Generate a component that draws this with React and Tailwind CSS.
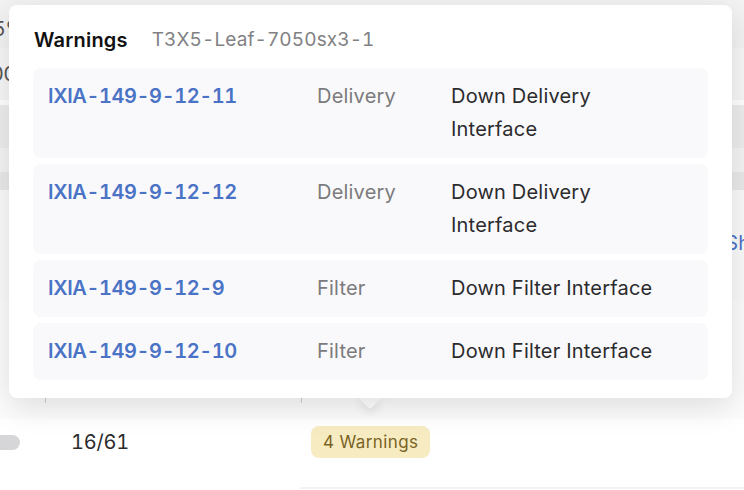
const warnings = [
  { port: "IXIA-149-9-12-11", type: "Delivery", desc: "Down Delivery Interface" },
  { port: "IXIA-149-9-12-12", type: "Delivery", desc: "Down Delivery Interface" },
  { port: "IXIA-149-9-12-9", type: "Filter", desc: "Down Filter Interface" },
  { port: "IXIA-149-9-12-10", type: "Filter", desc: "Down Filter Interface" },
];

function WarningRow({ w }) {
  return (
    <div className="flex items-start rounded-lg bg-[#f9f9fb] py-3 pl-[15px] text-[20px] leading-[33px] tracking-[0.2px]">
      <span className="w-[269px] shrink-0 font-semibold tabular-nums tracking-[-0.4px] text-[#4a73c6]">{w.port}</span>
      <span className="w-[134px] shrink-0 text-[#7b7b7d]">{w.type}</span>
      <span className="w-[214px] text-[#2b2b2d]">{w.desc}</span>
    </div>
  );
}

export default function App() {
  return (
    <div className="relative h-[490px] w-[744px] overflow-hidden bg-white font-['Inter',sans-serif]">
      {/* background table, dimmed behind the popover */}
      <div className="flex flex-col text-[20px] text-[#2b2b2d]">
        <div className="flex h-[48px] items-center bg-[#f3f3f4]">
          <span className="-ml-[7px] mt-[10px] text-[#555]">5%</span>
        </div>
        <div className="flex h-[52px] items-center bg-[#f7f7f8]">
          <span className="-ml-[9px] text-[#555]">00</span>
        </div>
        <div className="h-[5px] bg-white"></div>
        <div className="h-[43px] bg-[#ededee]"></div>
        <div className="h-[24px] bg-[#f4f4f5]"></div>
        <div className="h-[18px] bg-[#e9e9ea]"></div>
        <div className="flex h-[110px] items-center justify-end bg-[#fafafa]">
          <span className="-mr-[6px] mt-[-4px] text-[#4a73c6]">Sh</span>
        </div>
        <div className="h-[119px] bg-[#fcfcfc]"></div>
        <div className="flex h-[46px] items-center">
          <div className="-ml-[10px] h-[15px] w-[30px] rounded-full bg-[#d6d6d8]"></div>
          <span className="ml-[51px] w-[240px] tabular-nums tracking-[-0.2px]">16/61</span>
          <span className="rounded-lg bg-[#f6ebc1] px-[12px] py-[3px] text-[17px] leading-[26px] tracking-[0.4px] text-[#7a6325]">
            4 Warnings
          </span>
        </div>
        <div className="h-[22px]"></div>
        <div className="ml-[300px] h-[2px] bg-[#f3f3f4]"></div>
      </div>

      {/* column ticks peeking below the popover */}
      <div className="absolute left-[45px] top-[396px] h-[7px] w-px bg-[#cfcfd1]"></div>
      <div className="absolute left-[301px] top-[396px] h-[7px] w-px bg-[#cfcfd1]"></div>

      {/* popover arrow */}
      <div className="absolute left-[362px] top-[390px] h-[16px] w-[16px] rotate-45 rounded-[3px] bg-white shadow-[4px_4px_10px_rgba(0,0,0,0.08)]"></div>

      {/* popover */}
      <div className="absolute left-[9px] top-[5px] w-[723px] rounded-lg bg-white px-6 pb-[18px] pt-[23px] shadow-[0_8px_32px_rgba(0,0,0,0.13)]">
        <div className="mb-4 flex items-center gap-[24px] pl-px leading-[24px]">
          <span className="text-[20px] font-semibold tracking-[0.2px] text-[#111]">Warnings</span>
          <span className="text-[19px] tabular-nums tracking-[0.1px] text-[#818183]">T3X5-Leaf-7050sx3-1</span>
        </div>
        <div className="flex flex-col gap-[6px]">
          {warnings.map((w) => (
            <WarningRow key={w.port} w={w} />
          ))}
        </div>
      </div>
    </div>
  );
}
